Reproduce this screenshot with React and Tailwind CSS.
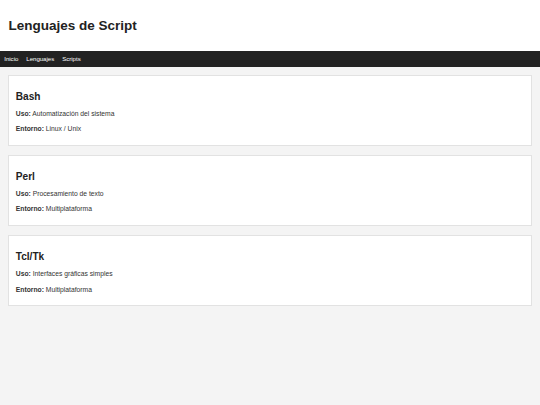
import React from 'react';

const languages = [
  { name: 'Bash', uso: 'Automatización del sistema', entorno: 'Linux / Unix' },
  { name: 'Perl', uso: 'Procesamiento de texto', entorno: 'Multiplataforma' },
  { name: 'Tcl/Tk', uso: 'Interfaces gráficas simples', entorno: 'Multiplataforma' },
];

export default function App() {
  return (
    <div className="min-h-[405px] bg-[#f4f4f4] text-[#333] leading-[normal] font-['Liberation_Sans',Arial,sans-serif]">
      <header className="bg-white px-[8.44px] h-[50.5px] flex items-center">
        <h1 className="text-[13.5px] font-bold text-[#222] mt-[1px]">Lenguajes de Script</h1>
      </header>

      <nav className="bg-[#222] px-[4.22px] h-[16px] flex items-center gap-[7.9px]">
        <a href="#" className="text-white text-[6.075px]">Inicio</a>
        <a href="#" className="text-white text-[6.075px]">Lenguajes</a>
        <a href="#" className="text-white text-[6.075px]">Scripts</a>
      </nav>

      <main className="p-[8.44px]">
        {languages.map(lang => (
          <Card key={lang.name} {...lang} />
        ))}
      </main>
    </div>
  );
}

function Card({ name, uso, entorno }) {
  return (
    <section className="bg-white border border-[#e2e2e2] px-[6.33px] pt-[6.33px] pb-[4.4px] mb-[9px]">
      <h2 className="text-[10.125px] font-bold text-[#222] my-[8.4px]">{name}</h2>
      <p className="text-[6.75px] leading-[8.55px] my-[6.75px]"><strong>Uso:</strong> {uso}</p>
      <p className="text-[6.75px] leading-[8.55px] my-[6.75px]"><strong>Entorno:</strong> {entorno}</p>
    </section>
  );
}
